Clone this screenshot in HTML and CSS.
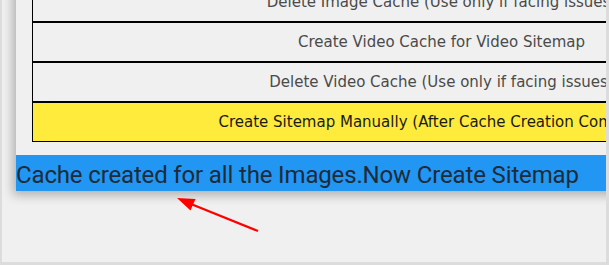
FILE: index.html
```html
<!DOCTYPE html>
<html lang="en">

<head>
    <meta charset="UTF-8">
    <meta name="viewport" content="width=device-width, initial-scale=1.0">
    <title>Sitemap Cache</title>
    <link rel="stylesheet" href="styles.css">
</head>

<body>
    <div class="frame">
        <div class="card">
            <div class="actions">
                <div class="action">Delete Image Cache (Use only if facing issues)</div>
                <div class="action">Create Video Cache for Video Sitemap</div>
                <div class="action">Delete Video Cache (Use only if facing issues)</div>
                <div class="action highlight">Create Sitemap Manually (After Cache Creation Completes)</div>
            </div>
            <div class="notice">Cache created for all the Images.Now Create Sitemap</div>
        </div>

        <svg class="arrow" width="609" height="265" viewBox="0 0 609 265">
            <line x1="258" y1="231" x2="186" y2="202" stroke="#ff0000" stroke-width="2.2"></line>
            <polygon points="177,198 195.5,199 190.5,210.5" fill="#ff0000"></polygon>
        </svg>
    </div>
</body>

</html>
```

FILE: styles.css
```css
body {
    margin: 0;
}

.frame {
    position: relative;
    width: 609px;
    height: 265px;
    box-sizing: border-box;
    border-left: 2px solid #dcdcdc;
    border-right: 3px solid #dcdcdc;
    border-bottom: 3px solid #dcdcdc;
    background: #f0f0f0;
    overflow: hidden;
}

.card {
    width: 860px;
    margin: -30px 0 0 14px;
    padding-top: 12px;
    background: #f0f0f0;
    box-shadow: -3px 4px 10px rgba(0, 0, 0, 0.28);
}

.actions {
    width: 819px;
    margin-left: 16px;
}

.action {
    height: 38px;
    line-height: 38px;
    border: 1px solid #000;
    text-align: center;
    white-space: nowrap;
    font-family: "DejaVu Sans", Verdana, sans-serif;
    font-size: 15px;
    color: #4a4a4a;
}

.highlight {
    background: #ffeb3b;
    color: #1a1a1a;
}

.notice {
    margin-top: 13px;
    height: 36px;
    box-sizing: border-box;
    padding-top: 2px;
    line-height: 36px;
    background: #2196f3;
    font-family: Roboto, "Noto Sans", sans-serif;
    font-size: 24px;
    letter-spacing: -0.15px;
    color: #1e2b38;
    white-space: nowrap;
    overflow: hidden;
}

.arrow {
    position: absolute;
    left: -2px;
    top: 0;
}
```
